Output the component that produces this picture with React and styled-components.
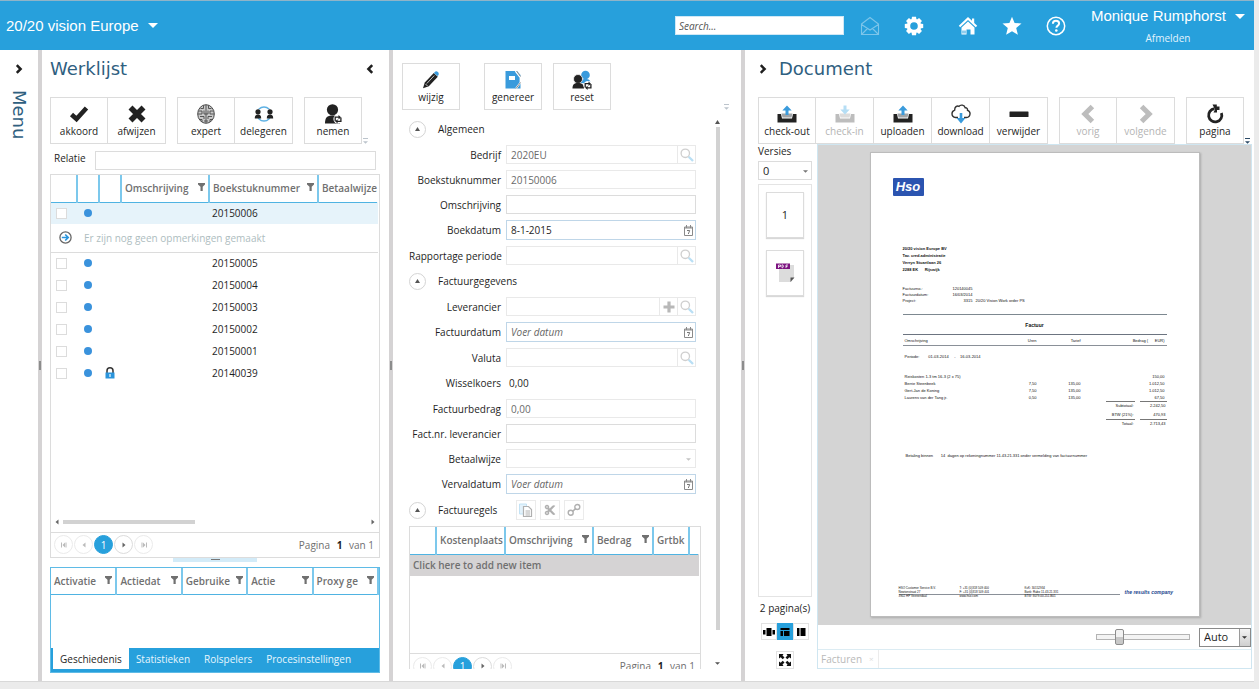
import React, { useState } from 'react';
import styled, { createGlobalStyle } from 'styled-components';
import { FaCut } from 'react-icons/fa';

const GlobalStyle = createGlobalStyle`
    * {
        box-sizing: border-box;
    }

    body {
        margin: 0;
        background: #ebebeb;
        color: #1e1e1e;
        font-family: 'Open Sans', 'Noto Sans', sans-serif;
        font-size: 10px;
        line-height: 12px;
    }

    button, input, select {
        margin: 0;
        font: inherit;
        color: inherit;
    }

    button {
        padding: 0;
        border: 0;
        background: none;
        cursor: pointer;
    }

    svg {
        display: block;
        flex: none;
    }
`;

const BLUE = '#27a0dc';
const LINE = '#dcdcdc';

/* ---------- icons ---------- */

const Svg = ({ w = 20, h = 20, box, children }) => (
    <svg width={w} height={h} viewBox={box || `0 0 ${w} ${h}`} fill='none' aria-hidden='true'>
        {children}
    </svg>
);

const CaretDown = ({ w = 10, h = 5, color = '#fff' }) => (
    <Svg w={w} h={h} box='0 0 10 5'>
        <path d='M0 0h10L5 5z' fill={color} />
    </Svg>
);

const CaretUp = () => (
    <Svg w={5} h={4}>
        <path d='M0 4h5L2.5 0z' fill='#555' />
    </Svg>
);

const Chevron = ({ dir = 'right', size = 10, color = '#1f1f1f' }) => (
    <Svg w={size} h={size} box='0 0 10 10'>
        <path
            d={dir === 'right' ? 'M2.800 1.200L6.600 5 2.800 8.800' : 'M7.200 1.200L3.400 5l3.800 3.800'}
            stroke={color}
            strokeWidth='2.5'
        />
    </Svg>
);

const FilterIcon = () => (
    <Svg w={7} h={8}>
        <path d='M0 0h7v1.500L4.700 3.800V8H2.500V3.800L0 1.500z' fill='#707070' />
    </Svg>
);

const EnvelopeIcon = () => (
    <Svg>
        <path d='M1.5 8L10 1.5 18.500 8v10.500h-17zM1.500 8.500L10 14l8.500-5.500M1.500 18.500l6-6M18.500 18.500l-6-6' stroke='#7cc5ea' strokeWidth='1.100' />
    </Svg>
);

const GearIcon = () => (
    <Svg>
        <circle cx='10' cy='10' r='5.500' stroke='#fff' strokeWidth='3.400' />
        {[0, 45, 90, 135, 180, 225, 270, 315].map((angle) => (
            <path key={angle} d='M8 0.800h4l0.500 3.200h-5z' fill='#fff' transform={`rotate(${angle} 10 10)`} />
        ))}
    </Svg>
);

const StarIcon = () => (
    <Svg>
        <path d='M10 0.800l2.600 6.200 6.900.5-5.300 4.400 1.700 6.900L10 15.200l-5.900 3.600 1.700-6.900L.5 7.500l6.900-.5z' fill='#fff' />
    </Svg>
);

const HouseIcon = () => (
    <Svg>
        <path d='M10 1L0.800 9.800l1.400 1.500L10 4l7.800 7.300 1.400-1.500-3-2.800V2.500h-2.200v2.300z' fill='#fff' />
        <path d='M3.500 11.500L10 5.500l6.500 6V18.500h-4v-5h-4v5h-5z' fill='#fff' />
        <path d='M4 14.500h4v3H4z' fill='#8ccdee' />
    </Svg>
);

const HelpIcon = () => (
    <Svg>
        <circle cx='10' cy='10' r='8.700' stroke='#fff' strokeWidth='1.500' />
        <path d='M6.900 7.800c0-2 1.400-3 3.100-3s3.100 1 3.100 2.700c0 2.200-2.700 2.100-2.700 4.300' stroke='#fff' strokeWidth='2' />
        <circle cx='10.300' cy='14.500' r='1.300' fill='#fff' />
    </Svg>
);

const CheckIcon = () => (
    <Svg>
        <path d='M2.500 10.500l5 4.500L17.500 4' stroke='#222' strokeWidth='4.600' />
    </Svg>
);

const CrossIcon = () => (
    <Svg>
        <path d='M3.500 3.500l13 13M16.500 3.500l-13 13' stroke='#222' strokeWidth='5.600' />
    </Svg>
);

const BrainIcon = () => (
    <Svg>
        <ellipse cx='10' cy='10' rx='8.300' ry='9.300' fill='#c9c9c9' stroke='#4a4a4a' strokeWidth='1' />
        <path
            d='M10 1v18M7.500 1.500v3H4.500M12.500 1.500v3h3M2.500 7H6v3H2M17.500 7H14v3h4M8 6.500V10h2M12 6.500V10h-2M4 12.500h4V15M16 12.500h-4V15M3.500 15.500H6V18M16.500 15.500H14V18M8 17h4'
            stroke='#4a4a4a'
            strokeWidth='0.900'
        />
    </Svg>
);

const DelegateIcon = () => (
    <Svg>
        <circle cx='10' cy='10' r='7' stroke='#5eb1e4' strokeWidth='1.400' />
        <path d='M0 5.500h6.500v8.500H0zM13.500 5.500H20v8.500h-6.500z' fill='#fff' />
        <circle cx='4' cy='7.800' r='2.600' fill='#222' />
        <circle cx='16' cy='7.800' r='2.600' fill='#222' />
        <path d='M0.800 14.500c0-3 1-4 3.200-4s3.200 1 3.200 4zM12.800 14.500c0-3 1-4 3.200-4s3.200 1 3.200 4z' fill='#222' />
    </Svg>
);

const CycleMark = ({ x, y }) => (
    <g transform={`translate(${x} ${y})`}>
        <circle cx='4' cy='4' r='4.600' fill='#fff' />
        <path d='M1.200 6V2.200h4M6.900 2.500v3.800H3' stroke='#222' strokeWidth='1.300' />
        <path d='M4.500 0L7 2.200 4.500 4.400zM3.600 4.200L1.100 6.300l2.500 2.200z' fill='#222' />
    </g>
);

const TakeIcon = () => (
    <Svg>
        <circle cx='9.500' cy='5.800' r='5.600' fill='#222' />
        <path d='M2 19.500c0-6 2-8 7.500-8s7.500 2 7.500 8z' fill='#222' />
        <CycleMark x={11} y={11} />
    </Svg>
);

const PencilIcon = () => (
    <Svg>
        <path d='M3.800 12.500L12.800 3l4 3.800-9 9.500-5.800 2z' fill='#222' />
        <path d='M13.600 2.200c1-1.200 2.200-1.200 3.300-.2s1.200 2.300.3 3.400l-.6.700-3.700-3.200z' fill='#3a9bdc' />
        <path d='M5.800 13.500l7.500-8M4.500 14l2 2' stroke='#fff' strokeWidth='0.700' />
    </Svg>
);

const BookIcon = () => (
    <Svg>
        <path d='M2.500 1H14l3.500 4v13.500h-15z' fill='#3a9bdc' />
        <path d='M6 6h6v4H6z' fill='#fff' />
        <path d='M12.500 1l5 6.500v5l-4.500 6' stroke='#fff' strokeWidth='1.800' />
        <path d='M13.500 1l4 5.500M17.500 12.500L13 18.500' stroke='#8d8d8d' strokeWidth='1' />
    </Svg>
);

const ResetIcon = () => (
    <Svg>
        <circle cx='13.500' cy='5' r='4.300' fill='#3a9bdc' />
        <path d='M9 13c0-3 1-4 4.500-4s5 1 5 5z' fill='#3a9bdc' />
        <circle cx='6' cy='9' r='4.500' fill='#222' stroke='#fff' strokeWidth='0.700' />
        <path d='M0.500 18.500c0-4 1.500-5.500 5.500-5.500s6 1.500 6 5.500z' fill='#222' />
        <CycleMark x={12} y={11.500} />
    </Svg>
);

const TrayIcon = ({ down, dim }) => (
    <Svg>
        <path d='M0.500 10H4l1 4.500h10l1-4.500h3.500v8.500H0.500z' fill={dim ? '#bdbdbd' : '#222'} />
        <path d='M4.500 9.500h11l-1 4h-9z' fill={dim ? '#dcdcdc' : '#a0a4a8'} />
        <path
            d={down ? 'M8.500 1.500h3v4h3.200L10 10.500 5.300 5.500h3.200z' : 'M8.500 11h3V6.500h3.200L10 1.500 5.300 6.500h3.200z'}
            fill={dim ? '#b5def5' : '#3a9bdc'}
        />
    </Svg>
);

const CloudIcon = () => (
    <Svg>
        <path
            d='M7 13.500H4.500C2.500 13.300 1 11.800 1 9.800s1.200-3.200 2.700-3.700C3.500 3 6 1.300 8 2.300c1.500-2 5.500-1.500 6.200 1.500 1.600-.2 2.500 1 2.300 2.500 1.700.5 2.700 1.700 2.500 3.700-.2 2-1.500 3.400-3.500 3.500H13'
            stroke='#333'
            strokeWidth='1.400'
        />
        <path d='M8.700 9h2.600v5h3.200L10 19.500 5.500 14h3.200z' fill='#3a9bdc' />
    </Svg>
);

const MinusIcon = () => (
    <Svg>
        <rect x='0.500' y='7.500' width='19' height='5.500' rx='0.500' fill='#222' />
    </Svg>
);

const RotateIcon = () => (
    <Svg>
        <path d='M9.500 4.700A6.600 6.600 0 1 0 16.400 9' stroke='#222' strokeWidth='2.800' />
        <path d='M7.500 0.500h4.300v2h2.700v3.500H12v2.500H8.500l1.500-3z' fill='#222' />
    </Svg>
);

const SearchIcon = () => (
    <Svg w={14} h={14}>
        <circle cx='5.300' cy='5.300' r='4.200' stroke='#cfcfcf' strokeWidth='1.300' />
        <path d='M8.700 8.700l4.300 4.300' stroke='#b9dff4' strokeWidth='2.300' />
    </Svg>
);

const PlusIcon = () => (
    <Svg w={12} h={12}>
        <path d='M6 0.500v11M0.500 6h11' stroke='#b8b8b8' strokeWidth='3.200' />
    </Svg>
);

const CalendarIcon = () => (
    <Svg w={9} h={11}>
        <path d='M0.500 2h8v8.500h-8z' stroke='#8a8a8a' />
        <path d='M2.500 0v3M6.500 0v3' stroke='#8a8a8a' />
        <path d='M0.500 3h8' stroke='#8a8a8a' />
        <path d='M3 5.500h2.700L4.300 9' stroke='#777' />
    </Svg>
);

const CopyIcon = () => (
    <Svg w={14} h={14}>
        <path d='M0.500 1h7v10h-7z' fill='#e3f2fb' stroke='#c2e2f5' />
        <path d='M4.500 3.500h5l3 3v7h-8z' fill='#fff' stroke='#b0b0b0' strokeWidth='1.200' />
        <path d='M6.500 8h4.500M6.500 10h4.500M6.500 12h4.500' stroke='#b0b0b0' />
    </Svg>
);

const LinkIcon = () => (
    <Svg w={14} h={14}>
        <circle cx='3.700' cy='9.800' r='2.500' stroke='#b0b0b0' strokeWidth='1.400' />
        <circle cx='10.300' cy='4' r='2.500' stroke='#b0b0b0' strokeWidth='1.400' />
        <path d='M5.500 8.500l3.200-3' stroke='#b0b0b0' strokeWidth='1.600' />
    </Svg>
);

const LockIcon = () => (
    <Svg w={10} h={12}>
        <path d='M2 6V3.800a3 3 0 0 1 6 0V6' stroke='#333' strokeWidth='1.500' />
        <path d='M0.500 5.500h9v6h-9z' fill='#2b95dc' />
        <path d='M5 7v3' stroke='#d7eefb' strokeWidth='1.400' />
    </Svg>
);

const ArrowCircleIcon = () => (
    <Svg w={13} h={13}>
        <circle cx='6.500' cy='6.500' r='5.600' stroke='#666' strokeWidth='1.300' />
        <path d='M2.800 6.500h6M6.200 3.500l3 3-3 3' stroke='#2b95dc' strokeWidth='1.700' />
    </Svg>
);

const PdfIcon = () => (
    <Svg w={21} h={22}>
        <path d='M4 3h15v13l-3 4H4z' fill='#dcdcdc' />
        <path d='M1 1.500h14v5.500H1z' fill='#7d1481' />
        <path d='M3.500 6V3h2v1.500h-2M7 2.800v3c2 0 2-3 0-3M11 6V3h2M11 4.500h1.500' stroke='#fff' strokeWidth='0.800' />
        <path d='M15.500 20v-4.500h4z' fill='#555' />
    </Svg>
);

const FullscreenIcon = () => (
    <Svg w={14} h={14}>
        <path
            d='M1 1h4.500L4.500 2.500l2 2-1.800 1.800-2-2L1 5.500zM13 1v4.500l-1.700-1.200-2 2-1.800-1.800 2-2L8.500 1zM1 13V8.500l1.700 1.200 2-2 1.800 1.800-2 2L5.500 13zM13 13H8.500l1-1.500-2-2 1.800-1.800 2 2L13 8.500z'
            fill='#111'
        />
    </Svg>
);

const ModeIcons = {
    carousel: (
        <Svg w={12} h={10}>
            <path d='M3.500 1h5v8h-5zM0 3h2.500v4.500H0zM9.500 3H12v4.500H9.500z' fill='#000' />
        </Svg>
    ),
    top: (
        <Svg w={12} h={10}>
            <path d='M1.500 1h9v2h-9zM1.500 4h2.500v5H1.500zM5 4h5.500v5H5z' fill='#000' />
        </Svg>
    ),
    side: (
        <Svg w={12} h={10}>
            <path d='M2 1h2.500v8H2zM5.500 1h5v8h-5z' fill='#000' />
        </Svg>
    ),
};

/* ---------- shell ---------- */

const Shell = styled.div`
    display: grid;
    grid-template-rows: 50px minmax(0, 1fr);
    height: 100vh;
    padding: 0 5px 7px 0;
`;

const Header = styled.header`
    display: flex;
    align-items: center;
    padding: 0 9px 0 6px;
    border-top: 1px solid #8fb4c8;
    background: ${BLUE};
    color: #fff;
`;

const HeaderMenu = styled.button`
    display: flex;
    align-items: center;
    gap: 9px;
    font-family: 'Liberation Sans', Arial, sans-serif;
    font-size: 15px;
    line-height: 18px;
    white-space: nowrap;
`;

const SearchBox = styled.input`
    width: 169px;
    height: 19px;
    margin-left: auto;
    padding: 0 3px;
    border: 1px solid #cfe8f6;
    background: #fff;
    color: #333;

    &::placeholder {
        color: #555;
        font-style: italic;
        opacity: 1;
    }
`;

const HeaderIcons = styled.nav`
    display: flex;
    gap: 24px;
    margin: 0 25px 0 16px;
`;

const IconButton = styled.button`
    display: flex;
    align-items: center;
    justify-content: center;
    margin-right: ${(props) => props.$space || 0}px;
`;

const UserBlock = styled.div`
    display: flex;
    flex-direction: column;
    align-items: center;
    gap: 7px;
`;

const LogoutLink = styled.a`
    color: #e2f3fc;
    text-decoration: none;
`;

const Workspace = styled.main`
    display: grid;
    grid-template-columns:
        38px 4px minmax(0, 347fr) 4px minmax(0, 348fr) 4px
        minmax(0, 509fr);
    min-height: 0;
    background: #fff;
    border-bottom: 1px solid #d8d8d8;
`;

const Splitter = styled.div`
    display: flex;
    align-items: center;
    justify-content: center;
    background: #d5d3d4;

    &::after {
        content: '';
        width: 2px;
        height: 9px;
        background: #8c8c8c;
    }
`;

const MenuRail = styled.aside`
    display: flex;
    flex-direction: column;
    align-items: center;
    gap: 16px;
    padding-top: 14px;
`;

const RailTitle = styled.h2`
    margin: 0;
    color: #2f607f;
    font-family: 'DejaVu Sans', Verdana, sans-serif;
    font-size: 18px;
    font-weight: 400;
    line-height: 22px;
    writing-mode: vertical-rl;
`;

const Panel = styled.section`
    display: flex;
    flex-direction: column;
    min-width: 0;
    min-height: 0;
    padding: ${(props) => props.$padding};
`;

const PanelHead = styled.div`
    display: flex;
    align-items: center;
    gap: 11px;
    height: 37px;
    margin-bottom: 10px;
    padding-right: 5px;
`;

const PanelTitle = styled.h2`
    flex: 1;
    margin: 0;
    color: #2f607f;
    font-family: 'DejaVu Sans', Verdana, sans-serif;
    font-size: 18px;
    font-weight: 400;
    line-height: 22px;
`;

const Toolbar = styled.div`
    display: flex;
    gap: 11px;
`;

const ToolGroup = styled.div`
    display: flex;
    margin-left: ${(props) => props.$indent || 0}px;
`;

const ToolButton = styled.button`
    display: flex;
    flex-direction: column;
    align-items: center;
    justify-content: center;
    gap: 1px;
    width: 58px;
    height: 47px;
    border: 1px solid ${LINE};
    background: #fff;
    white-space: nowrap;

    & + & {
        border-left: 0;
    }

    &:disabled {
        color: #b4b4b4;
    }
`;

const OverflowMark = styled.span`
    display: flex;
    flex-direction: column;
    align-items: center;
    align-self: flex-end;
    gap: 2px;
    width: 5px;
    margin: ${(props) => (props.$push ? '0 6px 0 auto' : '0 0 0 -10px')};
    color: ${(props) => (props.$dark ? '#2c4a66' : '#bcc4cc')};

    &::before {
        content: '';
        width: 5px;
        height: 1px;
        background: currentColor;
    }
`;

/* ---------- data grids ---------- */

const GridFrame = styled.div`
    display: flex;
    flex: ${(props) => (props.$fill ? 1 : 'none')};
    flex-direction: column;
    min-height: 0;
    border: 1px solid ${(props) => (props.$blue ? '#5fbbe6' : LINE)};
`;

const Table = styled.table`
    width: 100%;
    border-collapse: collapse;
    table-layout: fixed;
`;

const HeadCell = styled.th`
    height: 27px;
    padding: 0 0 0 3px;
    border-right: 2px solid #7cc8ec;
    border-bottom: 1px solid #4fb3e2;
    color: #707070;
    font-weight: 600;
    text-align: left;

    &:last-child {
        border-right-color: ${(props) => (props.$open ? 'transparent' : '#7cc8ec')};
    }
`;

const HeadInner = styled.div`
    display: flex;
    align-items: center;
    justify-content: space-between;
    padding-right: 3px;

    svg {
        margin-bottom: 2px;
    }
`;

const HeadText = styled.span`
    white-space: nowrap;
`;

const Cell = styled.td`
    height: ${(props) => props.$height || 22}px;
    padding: 0 0 0 3px;
    border-bottom: ${(props) => (props.$line ? `1px solid ${LINE}` : 0)};
    background: ${(props) => props.$fill || 'transparent'};
    color: ${(props) => props.$color || 'inherit'};
    font-weight: ${(props) => (props.$bold ? 600 : 400)};
    white-space: nowrap;
`;

const CheckBox = styled.input`
    display: block;
    appearance: none;
    width: 11px;
    height: 11px;
    margin-left: 2px;
    border: 1px solid ${LINE};
    background: #fff;
`;

const StatusDot = styled.span`
    display: block;
    width: 8px;
    height: 8px;
    margin-left: 4px;
    border-radius: 50%;
    background: #3a92dc;
`;

const LockMark = styled.span`
    display: block;
    padding-left: 3px;
`;

const Remark = styled.div`
    display: flex;
    align-items: center;
    gap: 12px;
    padding-left: 5px;
`;

const GridBody = styled.div`
    flex: 1;
    min-height: ${(props) => props.$min || 0}px;
`;

const HScroll = styled.div`
    display: flex;
    align-items: center;
    gap: 3px;
    height: 20px;
    padding: 0 3px;
    color: #666;
`;

const HThumb = styled.div`
    width: 132px;
    height: 4px;
    margin-right: auto;
    background: #d2d2d2;
`;

const PagerBar = styled.div`
    display: flex;
    align-items: center;
    gap: 1px;
    height: 25px;
    padding: 0 5px 0 3px;
    border-top: 1px solid ${LINE};
    color: #6f6f6f;
`;

const PageButton = styled.button`
    display: flex;
    align-items: center;
    justify-content: center;
    width: 19px;
    height: 19px;
    border: 1px solid ${(props) => (props.$active ? BLUE : LINE)};
    border-radius: 50%;
    background: ${(props) => (props.$active ? BLUE : '#fff')};
    color: ${(props) => (props.$active ? '#fff' : '#666')};

    &:disabled {
        border-color: #ebebeb;
        color: #bbb;
    }
`;

const PageInfo = styled.span`
    margin-left: auto;

    b {
        margin: 0 4px;
        color: #1e1e1e;
    }
`;

const RelationRow = styled.div`
    display: flex;
    align-items: flex-start;
    gap: 9px;
    margin: 7px 4px 4px 4px;
    line-height: 14px;
`;

const PlainInput = styled.input`
    flex: 1;
    min-width: 0;
    height: 19px;
    padding: 0 4px;
    border: 1px solid ${LINE};
    background: #fff;
`;

const Grip = styled.div`
    display: flex;
    align-items: center;
    justify-content: center;
    width: 84px;
    height: 4px;
    margin: 0 auto 5px;
    background: #d3ebf8;

    &::after {
        content: '';
        width: 9px;
        height: 1px;
        background: #777;
    }
`;

const TabBar = styled.div`
    display: flex;
    height: 24px;
    padding: 0 0 3px 2px;
    background: ${BLUE};
`;

const Tab = styled.button`
    padding: 0 7px;
    background: ${(props) => (props.$active ? '#fff' : 'transparent')};
    color: ${(props) => (props.$active ? '#1e1e1e' : '#e8f6fd')};
    white-space: nowrap;
`;

/* ---------- form ---------- */

const FormArea = styled.div`
    display: flex;
    flex: 1;
    min-height: 0;
    margin-top: 5px;
    overflow: hidden;
`;

const Form = styled.form`
    flex: 1;
    min-width: 0;
    padding: 4px 14px 0 7px;
`;

const SectionHead = styled.div`
    display: flex;
    align-items: center;
    gap: 12px;
    height: 20px;
    margin-bottom: 6px;
`;

const Collapse = styled.button`
    display: flex;
    align-items: center;
    justify-content: center;
    width: 17px;
    height: 17px;
    border: 1px solid #d4d4d4;
    border-radius: 50%;
`;

const SectionTools = styled.div`
    display: flex;
    gap: 4px;
    margin-left: 7px;
`;

const SmallButton = styled.button`
    display: flex;
    align-items: center;
    justify-content: center;
    width: 20px;
    height: 20px;
    border: 1px solid #ebebeb;
    color: #b0b0b0;
`;

const Fields = styled.div`
    display: grid;
    gap: 6px;
    margin-bottom: 6px;
    padding-right: 5px;
`;

const FieldRow = styled.div`
    display: grid;
    grid-template-columns: 92px minmax(0, 1fr);
    align-items: center;
    column-gap: 5px;
`;

const FieldLabel = styled.label`
    text-align: right;
    white-space: nowrap;
`;

const FieldBox = styled.div`
    display: flex;
    height: ${(props) => (props.$date ? 20 : 19)}px;
    border: 1px solid ${(props) => (props.$date ? '#bfd6e8' : props.$dim ? '#e9e9e9' : LINE)};
    background: #fff;
`;

const FieldInput = styled.input`
    flex: 1;
    min-width: 0;
    padding: 0 0 0 4px;
    border: 0;
    background: transparent;

    &:disabled {
        color: #6a6a6a;
    }

    &::placeholder {
        color: #666;
        font-style: italic;
        opacity: 1;
    }
`;

const FieldOutput = styled.output`
    padding-left: 3px;
    line-height: 20px;
`;

const FieldButton = styled.button`
    display: flex;
    align-items: center;
    justify-content: center;
    width: ${(props) => (props.$bare ? 13 : 18)}px;
    border-left: ${(props) => (props.$bare ? 0 : '1px solid #e9e9e9')};
`;

const VScroll = styled.div`
    display: flex;
    flex-direction: column;
    align-items: center;
    gap: 3px;
    width: 5px;
    margin-right: 15px;
    padding: 5px 0 4px;
`;

const VThumb = styled.div`
    width: 4px;
    height: 503px;
    margin-bottom: auto;
    background: #d2d2d2;
`;

/* ---------- select ---------- */

const SelectWrap = styled.div`
    position: relative;
    flex: ${(props) => (props.$grow ? 1 : 'none')};
    width: ${(props) => (props.$width ? `${props.$width}px` : 'auto')};

    svg {
        position: absolute;
        top: calc(50% - 1px);
        right: 4px;
        pointer-events: none;
    }
`;

const Select = styled.select`
    appearance: none;
    width: 100%;
    height: ${(props) => (props.$bare ? 17 : 19)}px;
    padding: 0 4px;
    border: ${(props) => (props.$bare ? 0 : `1px solid ${props.$dark ? '#8a8a8a' : LINE}`)};
    border-radius: 0;
    background: #fff;
    font-size: 11px;
`;

const SelectCap = styled.span`
    position: absolute;
    top: 1px;
    right: 1px;
    width: 11px;
    height: 17px;
    border-left: 1px solid #9a9a9a;
    background: linear-gradient(#f3f3f3, #cfcfcf);
    pointer-events: none;
`;

/* ---------- document viewer ---------- */

const ViewerGrid = styled.div`
    display: grid;
    grid-template-columns: 54px minmax(0, 1fr);
    column-gap: 5px;
    flex: 1;
    min-height: 0;
`;

const ThumbColumn = styled.div`
    display: flex;
    flex-direction: column;
    align-items: center;
    min-height: 0;
`;

const VersionLabel = styled.label`
    align-self: flex-start;
    margin-bottom: 4px;
    padding-top: 1px;
`;

const ThumbList = styled.div`
    display: flex;
    flex: 1;
    flex-direction: column;
    align-items: center;
    gap: 12px;
    width: 54px;
    margin-top: 4px;
    padding-top: 7px;
    border: 1px solid #e4e4e4;
`;

const Thumb = styled.button`
    display: flex;
    align-items: center;
    justify-content: center;
    width: 38px;
    height: 46px;
    border: 1px solid ${LINE};
    box-shadow: 0 1px 1px #d8d8d8;
    font-size: 11px;
`;

const PageCount = styled.div`
    margin: 5px 0 9px;
    white-space: nowrap;
`;

const ModeGroup = styled.div`
    display: flex;
    margin-bottom: 11px;
`;

const ModeButton = styled.button`
    display: flex;
    align-items: center;
    justify-content: center;
    width: ${(props) => props.$size || 16}px;
    height: ${(props) => props.$size || 17}px;
    border: 1px solid ${(props) => (props.$active ? BLUE : '#e2e2e2')};
    background: ${(props) => (props.$active ? BLUE : '#fff')};
`;

const Viewer = styled.div`
    display: flex;
    flex-direction: column;
    min-height: 0;
    border: 1px solid #cfe6f1;
`;

const Canvas = styled.div`
    display: flex;
    flex: 1;
    justify-content: center;
    min-height: 0;
    padding: 7px 0 8px;
    background: #d4d4d4;
`;

const ZoomBar = styled.div`
    display: flex;
    align-items: center;
    justify-content: flex-end;
    gap: 9px;
    height: 24px;
`;

const ZoomSlider = styled.input`
    appearance: none;
    width: 94px;
    height: 16px;
    margin: 0;
    background: transparent;

    &::-webkit-slider-runnable-track {
        height: 6px;
        border: 1px solid #b4b4b4;
        background: #f4f4f4;
    }

    &::-webkit-slider-thumb {
        appearance: none;
        width: 9px;
        height: 16px;
        margin-top: -6px;
        border: 1px solid #8c8c8c;
        border-radius: 2px;
        background: linear-gradient(#f2f2f2 50%, #c8c8c8 50%);
    }
`;

const DocTabs = styled.div`
    display: flex;
    height: 19px;
    border-top: 1px solid #dcecf3;
`;

const DocTab = styled.button`
    display: flex;
    align-items: center;
    gap: 7px;
    padding: 0 4px 0 3px;
    border-right: 1px solid #ececec;
    color: #b9b9b9;

    span {
        font-size: 8px;
        color: #dcdcdc;
    }
`;

/* ---------- scanned invoice ---------- */

const Sheet = styled.article`
    display: flex;
    flex-direction: column;
    width: 330px;
    padding: 25px 32px 0 32px;
    border: 1px solid #bcbcbc;
    box-shadow: 1px 1px 2px #aaa;
    background: #fff;
    color: #111;
    font-family: 'Liberation Sans', Arial, sans-serif;
    font-size: 4px;
    line-height: 7px;
    white-space: pre;
`;

const HsoLogo = styled.div`
    width: 31px;
    height: 18px;
    margin-left: -10px;
    border-radius: 1px;
    background: #2b54b0;
    color: #fff;
    font-size: 13px;
    font-style: italic;
    font-weight: 700;
    line-height: 18px;
    text-align: center;
`;

const Address = styled.address`
    margin: 49px 0 13px;
    font-style: normal;
    font-weight: 700;
`;

const MetaTable = styled.table`
    width: 130px;
    border-collapse: collapse;
    line-height: 6px;

    th, td {
        padding: 0;
        font-weight: 400;
        text-align: left;
    }

    td:nth-child(2) {
        width: 36px;
        padding-right: 3px;
        text-align: right;
    }

    th {
        width: 37px;
    }
`;

const SheetTitle = styled.div`
    margin-top: 10px;
    padding: 7px 0 5px;
    border-top: 1px solid #7d8890;
    font-size: 5px;
    font-weight: 700;
    text-align: center;
`;

const LineTable = styled.table`
    width: 100%;
    border-collapse: collapse;
    table-layout: fixed;

    th {
        height: 11px;
        border-top: 1px solid #6c7480;
        border-bottom: 1px solid #8a9098;
        font-weight: 400;
    }

    th, td {
        padding: 0 2px;
        text-align: right;
    }

    th:first-child, td:first-child {
        text-align: left;
    }
`;

const PeriodCell = styled.td`
    height: 22px;
`;

const FirstCell = styled.td`
    height: 12px;
    vertical-align: bottom;
`;

const Totals = styled.dl`
    display: grid;
    grid-template-columns: 29px 27px;
    column-gap: 5px;
    justify-content: end;
    margin: 0;
    text-align: right;
`;

const TotalItem = styled.dt`
    margin: 0;
    padding: 0 1px;
    border-top: 1px solid ${(props) => (props.$line ? '#777' : 'transparent')};
    line-height: 8px;
`;

const Terms = styled.div`
    margin: 24px 0 0 3px;
`;

const SheetFooter = styled.footer`
    display: grid;
    grid-template-columns: 61px 65px 95px 1fr;
    margin: auto -14px 17px -4px;
    font-size: 3px;
    line-height: 4px;
`;

const FooterLined = styled.div`
    padding-bottom: 1px;
    background: linear-gradient(#8a9098, #8a9098) 0 8px / 100% 1px no-repeat;
`;

const Slogan = styled.strong`
    padding: 2px 0 0 5px;
    color: #24478f;
    font-size: 5px;
    font-style: italic;
    line-height: 9px;
`;

/* ---------- parts ---------- */

function Tool({ icon, label, disabled }) {
    return (
        <ToolButton type='button' disabled={disabled}>
            {icon}
            {label}
        </ToolButton>
    );
}

function Overflow(props) {
    return (
        <OverflowMark {...props}>
            <CaretDown w={5} h={3} color='currentColor' />
        </OverflowMark>
    );
}

function GridHead({ columns, open }) {
    return (
        <>
            <colgroup>
                {columns.map((col, i) => (
                    <col key={i} width={col.width} />
                ))}
            </colgroup>
            <thead>
                <tr>
                    {columns.map((col, i) => (
                        <HeadCell key={i} $open={open}>
                            <HeadInner>
                                <HeadText>{col.title}</HeadText>
                                {col.filter && <FilterIcon />}
                            </HeadInner>
                        </HeadCell>
                    ))}
                </tr>
            </thead>
        </>
    );
}

const Nav = ({ d }) => (
    <Svg w={6} h={6}>
        <path d={d} fill='currentColor' />
    </Svg>
);

function Pager() {
    return (
        <PagerBar>
            <PageButton type='button' disabled aria-label='Eerste pagina'>
                <Nav d='M0 0.500h1v5H0zM4 0.500v5L1.500 3zM4.500 0.500h1v5h-1z' />
            </PageButton>
            <PageButton type='button' disabled aria-label='Vorige pagina'>
                <Nav d='M4.500 0.500v5L1.500 3z' />
            </PageButton>
            <PageButton type='button' $active>1</PageButton>
            <PageButton type='button' aria-label='Volgende pagina'>
                <Nav d='M1.500 0.500v5l3-2.500z' />
            </PageButton>
            <PageButton type='button' disabled aria-label='Laatste pagina'>
                <Nav d='M0.500 0.500h1v5h-1zM2 0.500v5L4.500 3zM5 0.500h1v5H5z' />
            </PageButton>
            <PageInfo>
                Pagina <b>1</b> van 1
            </PageInfo>
        </PagerBar>
    );
}

function Field({ id, label, value, type, disabled, plus }) {
    return (
        <FieldRow>
            <FieldLabel htmlFor={id}>{label}</FieldLabel>
            {type === 'output' && <FieldOutput id={id}>{value}</FieldOutput>}
            {type === 'select' && (
                <FieldBox $dim>
                    <SelectWrap $grow>
                        <Select id={id} $bare disabled>
                            <option> </option>
                        </Select>
                        <CaretDown w={5} h={3} color='#c4c4c4' />
                    </SelectWrap>
                </FieldBox>
            )}
            {type !== 'output' && type !== 'select' && (
                <FieldBox $date={type === 'date'} $dim={disabled || type === 'lookup'}>
                    <FieldInput
                        id={id}
                        defaultValue={value}
                        disabled={disabled}
                        placeholder={type === 'date' ? 'Voer datum' : undefined}
                    />
                    {plus && (
                        <FieldButton type='button' aria-label='Toevoegen'>
                            <PlusIcon />
                        </FieldButton>
                    )}
                    {type === 'lookup' && (
                        <FieldButton type='button' aria-label='Zoeken'>
                            <SearchIcon />
                        </FieldButton>
                    )}
                    {type === 'date' && (
                        <FieldButton type='button' $bare aria-label='Kalender'>
                            <CalendarIcon />
                        </FieldButton>
                    )}
                </FieldBox>
            )}
        </FieldRow>
    );
}

function SectionTitle({ title, children }) {
    return (
        <SectionHead>
            <Collapse type='button' aria-label={title}>
                <CaretUp />
            </Collapse>
            {title}
            {children}
        </SectionHead>
    );
}

const WORK_COLUMNS = [
    { width: 26 },
    { width: 22 },
    { width: 22 },
    { title: 'Omschrijving', width: 88, filter: true },
    { title: 'Boekstuknummer', width: 109, filter: true },
    { title: 'Betaalwijze' },
];

const WORK_ROWS = [
    { number: '20150006', remark: 'Er zijn nog geen opmerkingen gemaakt' },
    { number: '20150005' },
    { number: '20150004' },
    { number: '20150003' },
    { number: '20150002' },
    { number: '20150001' },
    { number: '20140039', locked: true },
];

const HISTORY_COLUMNS = [
    { title: 'Activatie', filter: true },
    { title: 'Actiedat', filter: true },
    { title: 'Gebruike', filter: true },
    { title: 'Actie', filter: true },
    { title: 'Proxy ge', filter: true },
];

const LINE_COLUMNS = [
    { width: 26 },
    { title: 'Kostenplaats', width: 69 },
    { title: 'Omschrijving', width: 88, filter: true },
    { title: 'Bedrag', width: 60, filter: true },
    { title: 'Grtbk', width: 36 },
    {},
];

const TABS = ['Geschiedenis', 'Statistieken', 'Rolspelers', 'Procesinstellingen'];

function WorkList() {
    const [tab, setTab] = useState(TABS[0]);

    return (
        <Panel $padding='0 9px 8px 8px'>
            <PanelHead>
                <PanelTitle>Werklijst</PanelTitle>
                <IconButton aria-label='Inklappen'>
                    <Chevron dir='left' />
                </IconButton>
            </PanelHead>
            <Toolbar>
                <ToolGroup>
                    <Tool icon={<CheckIcon />} label='akkoord' />
                    <Tool icon={<CrossIcon />} label='afwijzen' />
                </ToolGroup>
                <ToolGroup>
                    <Tool icon={<BrainIcon />} label='expert' />
                    <Tool icon={<DelegateIcon />} label='delegeren' />
                </ToolGroup>
                <ToolGroup>
                    <Tool icon={<TakeIcon />} label='nemen' />
                </ToolGroup>
                <Overflow />
            </Toolbar>
            <RelationRow>
                <label htmlFor='relatie'>Relatie</label>
                <PlainInput id='relatie' />
            </RelationRow>
            <GridFrame $fill>
                <Table>
                    <GridHead columns={WORK_COLUMNS} open />
                    <tbody>
                        {WORK_ROWS.map((row, i) => {
                            const fill = i === 0 ? '#e6f3fa' : undefined;
                            return (
                                <React.Fragment key={row.number}>
                                    <tr>
                                        <Cell $fill={fill}>
                                            <CheckBox type='checkbox' aria-label={row.number} />
                                        </Cell>
                                        <Cell $fill={fill}><StatusDot /></Cell>
                                        <Cell $fill={fill}>
                                            {row.locked && <LockMark><LockIcon /></LockMark>}
                                        </Cell>
                                        <Cell $fill={fill} />
                                        <Cell $fill={fill}>{row.number}</Cell>
                                        <Cell $fill={fill} />
                                    </tr>
                                    {row.remark && (
                                        <tr>
                                            <Cell colSpan={6} $height={28} $line $color='#aebdc0'>
                                                <Remark>
                                                    <ArrowCircleIcon />
                                                    {row.remark}
                                                </Remark>
                                            </Cell>
                                        </tr>
                                    )}
                                </React.Fragment>
                            );
                        })}
                    </tbody>
                </Table>
                <GridBody />
                <HScroll>
                    <Nav d='M4.500 0.500v5L1.500 3z' />
                    <HThumb />
                    <Nav d='M1.500 0.500v5l3-2.500z' />
                </HScroll>
                <Pager />
            </GridFrame>
            <Grip />
            <GridFrame $blue>
                <Table>
                    <GridHead columns={HISTORY_COLUMNS} />
                </Table>
                <GridBody $min={53} />
                <TabBar role='tablist'>
                    {TABS.map((name) => (
                        <Tab
                            key={name}
                            type='button'
                            role='tab'
                            $active={tab === name}
                            onClick={() => setTab(name)}
                        >
                            {name}
                        </Tab>
                    ))}
                </TabBar>
            </GridFrame>
        </Panel>
    );
}

function InvoiceForm() {
    return (
        <Panel $padding='13px 6px 12px 9px'>
            <Toolbar>
                <ToolGroup>
                    <Tool icon={<PencilIcon />} label='wijzig' />
                </ToolGroup>
                <ToolGroup $indent={13}>
                    <Tool icon={<BookIcon />} label='genereer' />
                </ToolGroup>
                <ToolGroup>
                    <Tool icon={<ResetIcon />} label='reset' />
                </ToolGroup>
                <Overflow $push />
            </Toolbar>
            <FormArea>
                <Form>
                    <SectionTitle title='Algemeen' />
                    <Fields>
                        <Field id='bedrijf' label='Bedrijf' value='2020EU' type='lookup' disabled />
                        <Field id='boekstuk' label='Boekstuknummer' value='20150006' disabled />
                        <Field id='omschrijving' label='Omschrijving' />
                        <Field id='boekdatum' label='Boekdatum' value='8-1-2015' type='date' />
                        <Field id='periode' label='Rapportage periode' type='lookup' />
                    </Fields>
                    <SectionTitle title='Factuurgegevens' />
                    <Fields>
                        <Field id='leverancier' label='Leverancier' type='lookup' plus />
                        <Field id='factuurdatum' label='Factuurdatum' type='date' />
                        <Field id='valuta' label='Valuta' type='lookup' />
                        <Field id='koers' label='Wisselkoers' value='0,00' type='output' />
                        <Field id='bedrag' label='Factuurbedrag' value='0,00' disabled />
                        <Field id='factnr' label='Fact.nr. leverancier' />
                        <Field id='betaalwijze' label='Betaalwijze' type='select' />
                        <Field id='vervaldatum' label='Vervaldatum' type='date' />
                    </Fields>
                    <SectionTitle title='Factuuregels'>
                        <SectionTools>
                            <SmallButton type='button' aria-label='Kopiëren'><CopyIcon /></SmallButton>
                            <SmallButton type='button' aria-label='Knippen'><FaCut size={12} /></SmallButton>
                            <SmallButton type='button' aria-label='Koppelen'><LinkIcon /></SmallButton>
                        </SectionTools>
                    </SectionTitle>
                    <GridFrame>
                        <Table>
                            <GridHead columns={LINE_COLUMNS} open />
                            <tbody>
                                <tr>
                                    <Cell colSpan={6} $fill='#d5d3d4' $color='#707070' $bold>
                                        Click here to add new item
                                    </Cell>
                                </tr>
                            </tbody>
                        </Table>
                        <GridBody $min={77} />
                        <Pager />
                    </GridFrame>
                </Form>
                <VScroll>
                    <CaretUp />
                    <VThumb />
                    <CaretDown w={5} h={3} color='#555' />
                </VScroll>
            </FormArea>
        </Panel>
    );
}

const INVOICE_LINES = [
    ['Berrie Steenbeek', '7,50', '135,00', '1.012,50'],
    ['Gert-Jan de Koning', '7,50', '135,00', '1.012,50'],
    ['Laurens van der Tang jr.', '0,50', '135,00', '67,50'],
];

function InvoiceSheet() {
    return (
        <Sheet>
            <HsoLogo>Hso</HsoLogo>
            <Address>
                20/20 vision Europe BV<br />
                Tav. cred.administratie<br />
                Verryn Stuartlaan 26<br />
                {'2288 EK      Rijswijk'}
            </Address>
            <MetaTable>
                <tbody>
                    <tr><th>Factuurno.:</th><td>120140045</td><td /></tr>
                    <tr><th>Factuurdatum:</th><td>16/03/2014</td><td /></tr>
                    <tr><th>Project:</th><td>3315</td><td>20/20 Vision Work order PS</td></tr>
                </tbody>
            </MetaTable>
            <SheetTitle>Factuur</SheetTitle>
            <LineTable>
                <colgroup>
                    <col />
                    <col width={37} />
                    <col width={44} />
                    <col width={84} />
                </colgroup>
                <thead>
                    <tr>
                        <th>Omschrijving</th>
                        <th>Uren</th>
                        <th>Tarief</th>
                        <th>{'Bedrag (      EUR)'}</th>
                    </tr>
                </thead>
                <tbody>
                    <tr>
                        <PeriodCell colSpan={4}>{'Periode:        01-03-2014     -    16-03-2014'}</PeriodCell>
                    </tr>
                    <tr>
                        <FirstCell colSpan={3}>Reiskosten 1-3 tm 16-3 (2 x 75)</FirstCell>
                        <FirstCell>150,00</FirstCell>
                    </tr>
                    {INVOICE_LINES.map((line) => (
                        <tr key={line[0]}>
                            {line.map((text, i) => (
                                <td key={i}>{text}</td>
                            ))}
                        </tr>
                    ))}
                </tbody>
            </LineTable>
            <Totals>
                <TotalItem $line>Subtotaal:</TotalItem>
                <TotalItem as='dd' $line>2.242,50</TotalItem>
                <TotalItem>BTW (21%):</TotalItem>
                <TotalItem as='dd'>470,93</TotalItem>
                <TotalItem $line>Totaal:</TotalItem>
                <TotalItem as='dd' $line>2.713,43</TotalItem>
            </Totals>
            <Terms>
                {'Betaling binnen       14  dagen op rekeningnummer 11.43.21.331 onder vermelding van factuurnummer'}
            </Terms>
            <SheetFooter>
                <FooterLined>
                    HSO Customer Service B.V.<br />Newtonstraat 27<br />3902 HP Veenendaal
                </FooterLined>
                <FooterLined>
                    T: +31 (0)318 509 400<br />F: +31 (0)318 509 401<br />www.hso.com
                </FooterLined>
                <FooterLined>
                    KvK: 30152934<br />Bank: Rabo 11.43.21.331<br />BTW: 8079.00.251.B01
                </FooterLined>
                <Slogan>the results company</Slogan>
            </SheetFooter>
        </Sheet>
    );
}

function DocumentPanel() {
    const [mode, setMode] = useState('top');

    return (
        <Panel $padding='0 2px 12px 13px'>
            <PanelHead>
                <IconButton aria-label='Uitklappen'>
                    <Chevron />
                </IconButton>
                <PanelTitle>Document</PanelTitle>
            </PanelHead>
            <Toolbar>
                <ToolGroup>
                    <Tool icon={<TrayIcon />} label='check-out' />
                    <Tool icon={<TrayIcon down dim />} label='check-in' disabled />
                    <Tool icon={<TrayIcon />} label='uploaden' />
                    <Tool icon={<CloudIcon />} label='download' />
                    <Tool icon={<MinusIcon />} label='verwijder' />
                </ToolGroup>
                <ToolGroup>
                    <Tool icon={<Chevron dir='left' size={20} color='#bdbdbd' />} label='vorig' disabled />
                    <Tool icon={<Chevron size={20} color='#bdbdbd' />} label='volgende' disabled />
                </ToolGroup>
                <ToolGroup>
                    <Tool icon={<RotateIcon />} label='pagina' />
                </ToolGroup>
                <Overflow $dark />
            </Toolbar>
            <ViewerGrid>
                <ThumbColumn>
                    <VersionLabel htmlFor='versies'>Versies</VersionLabel>
                    <SelectWrap $width={54}>
                        <Select id='versies'>
                            <option>0</option>
                        </Select>
                        <CaretDown w={5} h={3} color='#777' />
                    </SelectWrap>
                    <ThumbList>
                        <Thumb type='button'>1</Thumb>
                        <Thumb type='button' aria-label='PDF'>
                            <PdfIcon />
                        </Thumb>
                    </ThumbList>
                    <PageCount>2 pagina(s)</PageCount>
                    <ModeGroup>
                        {Object.keys(ModeIcons).map((name) => (
                            <ModeButton
                                key={name}
                                type='button'
                                aria-label={name}
                                $active={mode === name}
                                onClick={() => setMode(name)}
                            >
                                {ModeIcons[name]}
                            </ModeButton>
                        ))}
                    </ModeGroup>
                    <ModeButton type='button' $size={18} aria-label='Volledig scherm'>
                        <FullscreenIcon />
                    </ModeButton>
                </ThumbColumn>
                <Viewer>
                    <Canvas>
                        <InvoiceSheet />
                    </Canvas>
                    <ZoomBar>
                        <ZoomSlider type='range' aria-label='Zoom' defaultValue={22} />
                        <SelectWrap $width={52}>
                            <Select aria-label='Zoomniveau' $dark>
                                <option>Auto</option>
                            </Select>
                            <SelectCap />
                            <CaretDown w={5} h={3} color='#333' />
                        </SelectWrap>
                    </ZoomBar>
                    <DocTabs>
                        <DocTab type='button'>
                            Facturen <span>×</span>
                        </DocTab>
                    </DocTabs>
                </Viewer>
            </ViewerGrid>
        </Panel>
    );
}

function App() {
    return (
        <>
            <GlobalStyle />
            <Shell>
                <Header>
                    <HeaderMenu type='button'>
                        20/20 vision Europe <CaretDown />
                    </HeaderMenu>
                    <SearchBox type='search' placeholder='Search...' aria-label='Search' />
                    <HeaderIcons>
                        <IconButton aria-label='Berichten'><EnvelopeIcon /></IconButton>
                        <IconButton aria-label='Instellingen' $space={10}><GearIcon /></IconButton>
                        <IconButton aria-label='Home'><HouseIcon /></IconButton>
                        <IconButton aria-label='Favorieten'><StarIcon /></IconButton>
                        <IconButton aria-label='Help'><HelpIcon /></IconButton>
                    </HeaderIcons>
                    <UserBlock>
                        <HeaderMenu type='button'>
                            Monique Rumphorst <CaretDown />
                        </HeaderMenu>
                        <LogoutLink href='#afmelden'>Afmelden</LogoutLink>
                    </UserBlock>
                </Header>
                <Workspace>
                    <MenuRail>
                        <IconButton aria-label='Menu openen'>
                            <Chevron />
                        </IconButton>
                        <RailTitle>Menu</RailTitle>
                    </MenuRail>
                    <Splitter role='separator' />
                    <WorkList />
                    <Splitter role='separator' />
                    <InvoiceForm />
                    <Splitter role='separator' />
                    <DocumentPanel />
                </Workspace>
            </Shell>
        </>
    );
}

export default App;
